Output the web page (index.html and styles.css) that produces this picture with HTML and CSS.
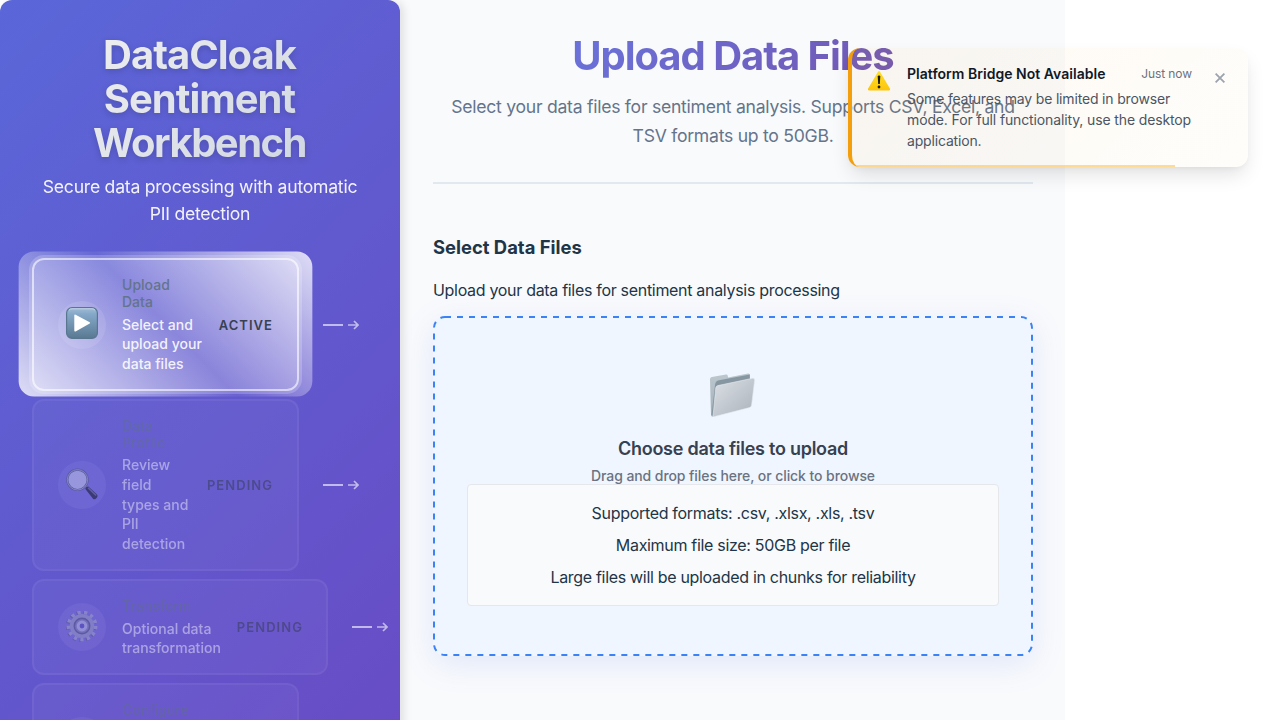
FILE: index.html
```
<!DOCTYPE html>
<html lang="en">
<head>
<meta charset="utf-8">
<title>DataCloak Sentiment Workbench</title>
<link rel="stylesheet" href="styles.css">
</head>
<body>
<div class="app">
  <aside class="sidebar">
    <header class="brand">
      <h1 class="brand-title">DataCloak<br>Sentiment<br><span class="brand-tight">Workbench</span></h1>
      <p class="brand-sub">Secure data processing with automatic<br>PII detection</p>
    </header>
    <nav class="steps">
      <div class="step">
        <div class="card card-active">
          <span class="step-icon">
            <svg class="play" width="32" height="32" viewBox="0 0 32 32">
              <defs><linearGradient id="play" x1="0" y1="0" x2="0" y2="1"><stop offset="0" stop-color="#a3bdd5"/><stop offset=".2" stop-color="#86a9c9"/><stop offset="1" stop-color="#597992"/></linearGradient></defs>
              <rect x=".6" y=".6" width="30.8" height="30.8" rx="5.5" fill="url(#play)" stroke="#58778f" stroke-width="1.2"/>
              <path d="M3 3.2Q4 1.8 6 1.8H26Q28 1.8 29 3.2" fill="none" stroke="#c4d8e8" stroke-width="1"/>
              <path d="M9.6 7.700 23.700 15.200Q24.700 15.900 23.700 16.600L9.600 24.400Q8.300 25 8.300 23.600V8.400Q8.300 7 9.600 7.700Z" fill="#fff"/>
            </svg>
          </span>
          <div class="step-text"><div class="step-name">Upload<br>Data</div><div class="step-desc">Select and<br>upload your<br>data files</div></div>
          <span class="step-status">Active</span>
        </div>
        <span class="link"><i class="link-line"></i><svg class="arrow" width="11" height="10" viewBox="0 0 11 10"><path d="M0 5H10M6 1l4 4-4 4"/></svg></span>
      </div>
      <div class="step">
        <div class="card card-pending card-tall">
          <span class="step-icon">
            <svg class="lens" width="32" height="32" viewBox="0 0 32 32">
              <path d="M18.200 19 20 17.400 22.500 20 20.500 21.800Z" fill="#8c93a0"/>
              <path d="M19.200 20.800Q20 18.600 22.300 18.600L31 26.600Q32.200 28.200 30.600 30Q29 31.900 27.200 31Z" fill="#171a22"/>
              <path d="M22 19.800 30.200 27.500" stroke="#626672" stroke-width="1.5"/>
              <circle cx="11.500" cy="11.800" r="10.200" fill="#cfd2ea" stroke="#525c72" stroke-width="2.200"/>
              <circle cx="11.500" cy="11.800" r="10.200" fill="none" stroke="#b8c2d4" stroke-width=".8"/>
            </svg>
          </span>
          <div class="step-text"><div class="step-name">Data<br>Profile</div><div class="step-desc">Review<br>field<br>types and<br>PII<br>detection</div></div>
          <span class="step-status">Pending</span>
        </div>
        <span class="link"><i class="link-line"></i><svg class="arrow" width="11" height="10" viewBox="0 0 11 10"><path d="M0 5H10M6 1l4 4-4 4"/></svg></span>
      </div>
      <div class="step">
        <div class="card card-pending card-wide">
          <span class="step-icon">
            <svg width="32" height="32" viewBox="-16 -15 32 32">
              <g fill="none">
                <circle r="13.600" stroke="#5f6384" stroke-width="3.600" stroke-dasharray="3.200 3.370" transform="translate(-.9 .7)"/>
                <circle r="13.600" stroke="#aeb2cc" stroke-width="3.600" stroke-dasharray="3.200 3.370"/>
                <circle r="9.800" stroke="#a2a6c2" stroke-width="4.600"/>
                <circle r="7.800" fill="#777b9b" stroke="#595d7d" stroke-width="1.400"/>
                <circle r="6" stroke="#8b8fae" stroke-width="1.200"/>
                <circle r="3.900" fill="#5852b8" stroke="#c6cae2" stroke-width="3"/>
              </g>
            </svg>
          </span>
          <div class="step-text"><div class="step-name">Transform</div><div class="step-desc">Optional data<br>transformation</div></div>
          <span class="step-status">Pending</span>
        </div>
        <span class="link"><i class="link-line"></i><svg class="arrow" width="11" height="10" viewBox="0 0 11 10"><path d="M0 5H10M6 1l4 4-4 4"/></svg></span>
      </div>
      <div class="step">
        <div class="card card-pending card-last">
          <span class="step-icon"></span>
          <div class="step-text"><div class="step-name">Configure</div></div>
        </div>
      </div>
    </nav>
  </aside>
  <main class="main">
    <header class="page-head">
      <h1 class="page-title">Upload Data Files</h1>
      <p class="page-sub">Select your data files for sentiment analysis. Supports CSV, Excel, and<br>TSV formats up to 50GB.</p>
    </header>
    <h3 class="section-title">Select Data Files</h3>
    <p class="section-text">Upload your data files for sentiment analysis processing</p>
    <section class="drop">
      <svg class="drop-border" width="600" height="340" viewBox="0 0 600 340"><rect x="1" y="1" width="598" height="338" rx="11"/></svg>
      <svg class="folder" width="48" height="48" viewBox="0 0 48 48">
        <defs>
          <linearGradient id="front" x1="0" y1="0" x2="1" y2="1"><stop offset="0" stop-color="#dde1e7"/><stop offset=".5" stop-color="#c3c9d0"/><stop offset="1" stop-color="#abb2ba"/></linearGradient>
          <linearGradient id="back" x1="0" y1="0" x2="0" y2="1"><stop offset="0" stop-color="#bcc7ce"/><stop offset="1" stop-color="#a3afb7"/></linearGradient>
        </defs>
        <path d="M1 7.200Q1 5.400 2.800 5L17 2.600Q18.600 2.400 18.800 4L19 5.600 39 1.500Q40.900 1.200 40.900 3L41 32 4 44.600Q2.200 44.800 2 43Z" fill="url(#back)"/>
        <path d="M6 13Q6.300 9 10 8.200L40.800 2.400V8L9 14 4.600 43.500 2.500 43Z" fill="#8797a2"/>
        <path d="M8.800 13.600 43.600 6.300Q45.800 6 45.600 8.200L42.600 33Q42.300 35 40.500 35.600L5.500 44.600Q3.900 44.900 4.200 43L6.700 16Q7 14 8.800 13.600Z" fill="url(#front)" stroke="#e4e9ee" stroke-width=".6"/>
      </svg>
      <div class="drop-title">Choose data files to upload</div>
      <div class="drop-hint">Drag and drop files here, or click to browse</div>
      <div class="limits">
        <p>Supported formats: .csv, .xlsx, .xls, .tsv</p>
        <p>Maximum file size: 50GB per file</p>
        <p>Large files will be uploaded in chunks for reliability</p>
      </div>
    </section>
  </main>
</div>
<div class="toast">
  <svg class="toast-icon" width="24" height="22" viewBox="0 0 24 22">
    <defs><linearGradient id="warn" x1="0" y1="0" x2="0" y2="1"><stop offset="0" stop-color="#ffdf2b"/><stop offset="1" stop-color="#fdc50a"/></linearGradient></defs>
    <path d="M11 1.700Q12 .3 13 1.700L23 18.800Q23.500 20.300 22 20.400H2Q.5 20.300 1 18.800Z" fill="url(#warn)"/>
    <path d="M10.700 6.600Q10.700 5.500 12 5.500T13.300 6.600L12.800 14H11.200Z" fill="#1b1a05"/><circle cx="12" cy="17" r="1.400" fill="#1b1a05"/>
  </svg>
  <div class="toast-body">
    <div class="toast-head"><span class="toast-title">Platform Bridge Not Available</span><span class="toast-time">Just now</span></div>
    <div class="toast-msg">Some features may be limited in browser<br><span class="msg-wide">mode. For full functionality, use the desktop</span><br>application.</div>
  </div>
  <svg class="toast-close" width="10" height="10" viewBox="0 0 10 10"><path d="M.6.6 9.400 9.400M9.400.6.6 9.400"/></svg>
  <div class="toast-progress"></div>
</div>
</body>
</html>
```
FILE: styles.css
```
* { box-sizing: border-box; margin: 0; padding: 0; }
html, body { height: 720px; overflow: hidden; }
body { background: #fff; color: #213547; font-family: Inter, "Liberation Sans", sans-serif; }
.app { display: flex; height: 720px; overflow: hidden; }

.sidebar {
  flex: none; width: 400px; height: 1000px; padding: 33px 32px 32px; position: relative; z-index: 1;
  border-radius: 12px; color: #fff; box-shadow: 4px 0 8px rgba(0, 0, 0, .1);
  background: linear-gradient(135deg, #5a67d8 0%, #6b46c1 100%);
}
.brand { text-align: center; margin-bottom: 31.4px; }
.brand-title {
  font-size: 40px; line-height: 44px; font-weight: 700; letter-spacing: -1px; margin: 0 1px 8px 0;
  color: transparent; background: linear-gradient(135deg, #f3f2f2 0%, #cbd3de 100%);
  -webkit-background-clip: text; background-clip: text;
  filter: drop-shadow(0 2px 3px rgba(0, 0, 0, .16));
}
.brand-tight { letter-spacing: -1.5px; }
.brand-sub { font-size: 17.6px; line-height: 27px; letter-spacing: -.24px; white-space: nowrap; opacity: .92; }

.steps { display: flex; flex-direction: column; gap: 8px; }
.step { display: flex; align-items: center; gap: 24px; }
.card {
  flex: none; width: 267px; padding: 16px 24px; display: flex; align-items: center; gap: 16px;
  position: relative; border: 2px solid rgba(255, 255, 255, .1); border-radius: 12px;
  background: rgba(255, 255, 255, .07);
}
.card-wide { width: 296px; }
.card-tall { height: 172.4px; }
.card-last { height: 116px; align-items: flex-start; }
.card-last .step-icon { margin-top: 16px; }
.card-pending { opacity: .5; }
.card-active {
  z-index: 0; border-color: rgba(255, 255, 255, .6); background: rgba(255, 255, 255, .22);
  box-shadow: 0 0 0 3px rgba(255, 255, 255, .2);
}
.card-active::before {
  content: ""; position: absolute; inset: -2px; z-index: -1; transform: scale(1.1); border-radius: 14px;
  background: linear-gradient(45deg, rgba(255, 255, 255, .8), rgba(255, 255, 255, .06), rgba(255, 255, 255, .8));
}
.step-icon {
  flex: none; width: 48px; height: 48px; border-radius: 50%; display: flex; align-items: center;
  justify-content: center; background: rgba(255, 255, 255, .1);
}
.play { margin-bottom: 3px; }
.lens { margin-bottom: 2px; }
.step-text { flex: 1; margin: .6px 0 -.6px; white-space: nowrap; font-size: 14px; font-weight: 450; letter-spacing: .02px; }
.step-name { line-height: 16.8px; margin-bottom: 4px; color: #64748b; }
.step-desc { line-height: 19.6px; color: rgba(255, 255, 255, .9); }
.step-status { font-size: 13px; font-weight: 600; letter-spacing: 1.05px; text-transform: uppercase; color: #374151; }
.link { display: flex; align-items: center; gap: 5px; }
.link-line { width: 20px; height: 2px; background: rgba(255, 255, 255, .6); }
.arrow { fill: none; stroke: rgba(255, 255, 255, .6); stroke-width: 1.7; }

.main { flex: none; width: 665px; padding: 32px 32px 32px 33px; background: #f9fafc; }
.page-head { text-align: center; padding-bottom: 32px; border-bottom: 2px solid #e2e8f0; margin-bottom: 49px; }
.page-title {
  margin-bottom: 12px; font-size: 40px; line-height: 48px; font-weight: 700;
  letter-spacing: -1.05px; color: transparent; background: linear-gradient(135deg, #667eea 0%, #764ba2 100%);
  -webkit-background-clip: text; background-clip: text;
}
.page-sub { font-size: 17.6px; line-height: 29px; letter-spacing: -.265px; color: #64748b; white-space: nowrap; }
.section-title { font-size: 18.4px; line-height: 28px; font-weight: 700; letter-spacing: 0; margin-bottom: 17px; }
.section-text { font-size: 16px; line-height: 24px; letter-spacing: -.31px; margin-bottom: 14px; }
.drop {
  height: 340px; padding: 50px 34px; display: flex; flex-direction: column; align-items: center;
  position: relative; border-radius: 12px; background: #eff6ff;
  box-shadow: 0 8px 32px rgba(79, 120, 234, .14);
}
.drop-border { position: absolute; inset: 0; fill: none; stroke: #3b82f6; stroke-width: 2; stroke-dasharray: 6 6; }
.folder { margin: 6px 0 14px; }
.drop-title { font-size: 18px; line-height: 27px; font-weight: 600; letter-spacing: -.26px; color: #374151; padding-top: 1px; }
.drop-hint { font-size: 14px; line-height: 21px; margin: 3px 0 -2px; font-weight: 500; letter-spacing: -.08px; color: #6b7280; }
.limits {
  width: 100%; height: 122px; padding: 16px; flex: none; display: flex; flex-direction: column; gap: 8px;
  text-align: center; font-size: 16px; line-height: 24px; letter-spacing: -.31px;
  border: 1px solid #e5e7eb; border-radius: 4px; background: #f9fafb;
}

.toast {
  position: absolute; left: 848px; top: 48px; width: 400px; height: 119px; z-index: 5;
  padding: 15px 28px 15px 15px; display: flex; border-left: 4px solid #f59e0b; border-radius: 12px; overflow: hidden;
  background: linear-gradient(135deg, rgba(245, 158, 11, .05), rgba(245, 158, 11, .02));
  box-shadow: 0 10px 20px -3px rgba(0, 0, 0, .12), 0 3px 6px -2px rgba(0, 0, 0, .05);
}
.toast-icon { flex: none; margin-top: 7px; margin-right: 16px; }
.toast-body { width: 285px; flex: none; }
.toast-head { display: flex; justify-content: space-between; align-items: center; height: 20px; margin-bottom: 5px; }
.toast-title { font-size: 14px; font-weight: 600; letter-spacing: .03px; color: #111827; }
.toast-time { font-size: 12px; letter-spacing: -.08px; color: #6b7280; }
.toast-msg { font-size: 14px; line-height: 21px; letter-spacing: -.17px; color: #4b5563; white-space: nowrap; }
.msg-wide { letter-spacing: -.13px; }
.toast-close { flex: none; margin: 10px 0 0 23px; fill: none; stroke: #9ca3af; stroke-width: 1.8; }
.toast-progress { position: absolute; left: 0; bottom: 0; width: 323px; height: 2px; background: rgba(255, 177, 32, .45); }
```
